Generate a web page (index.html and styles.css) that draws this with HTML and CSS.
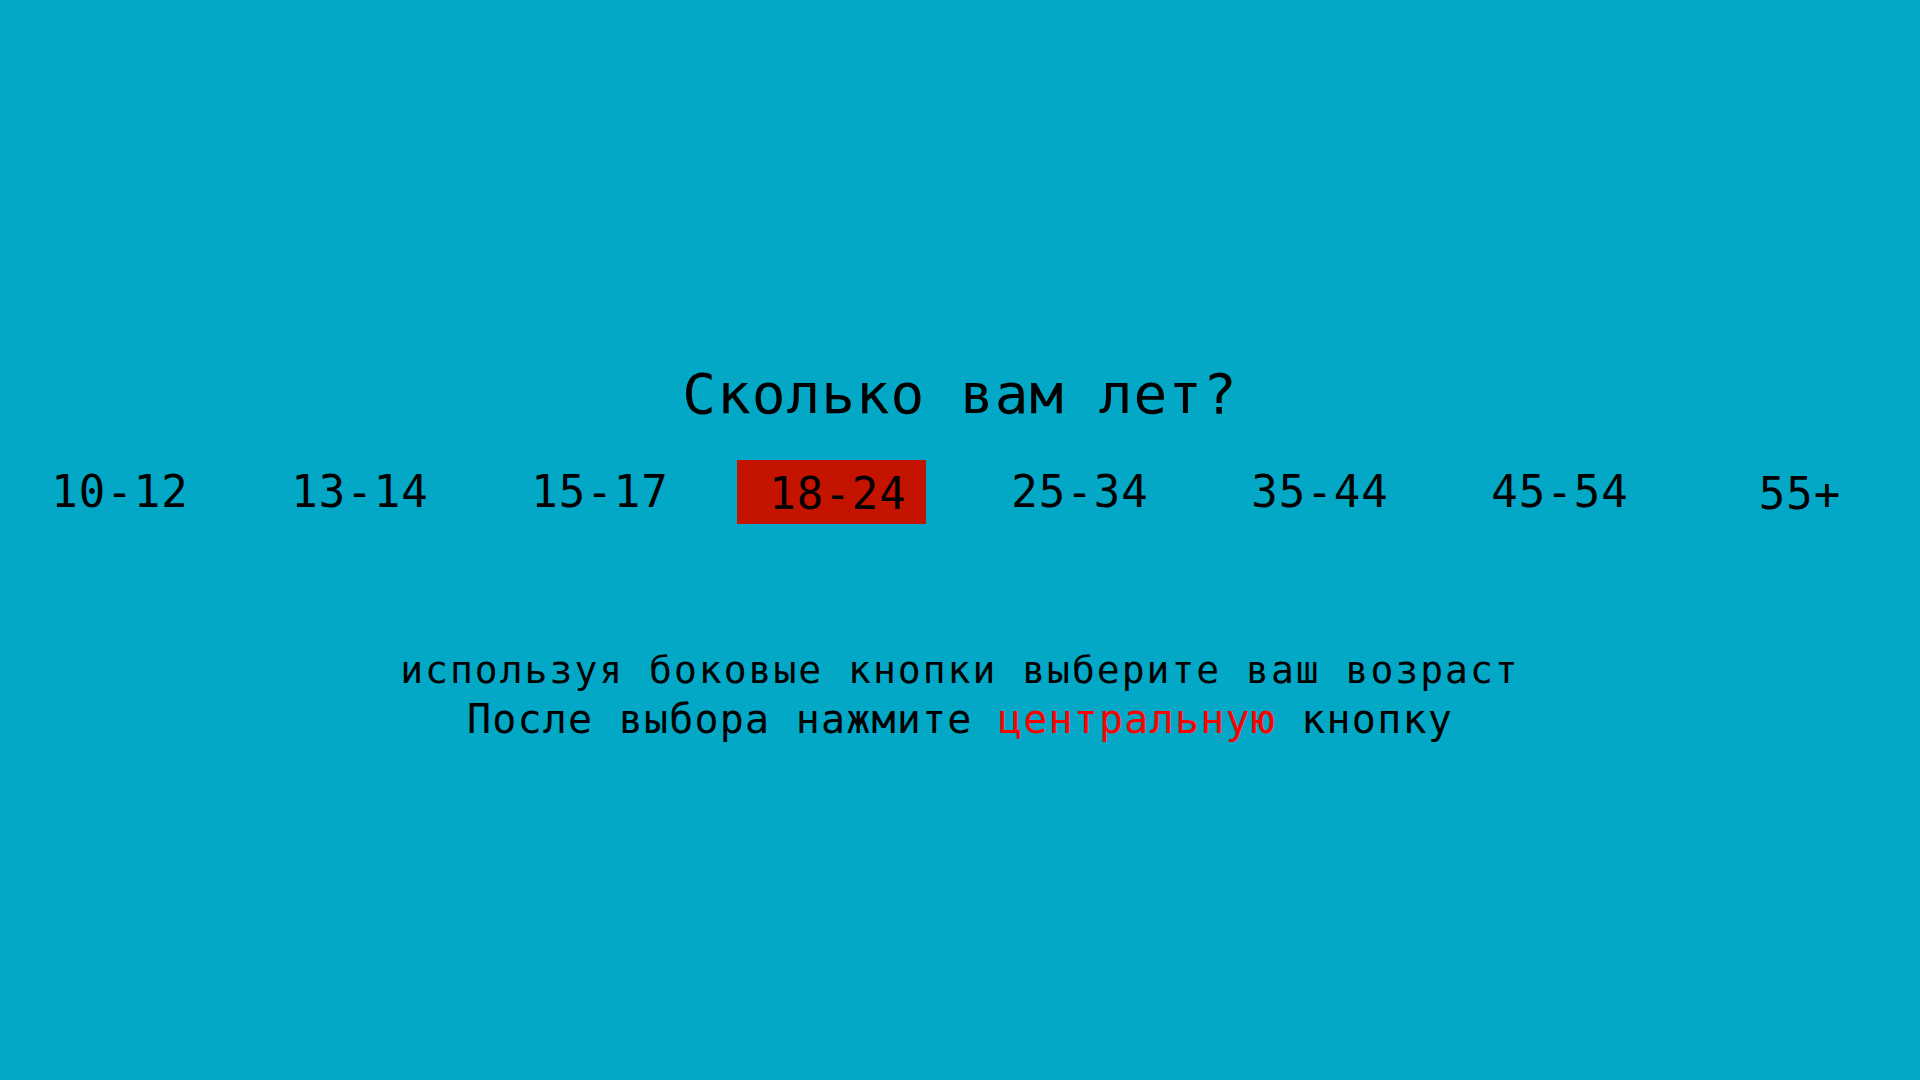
FILE: index.html
```html
<!DOCTYPE html>
<html lang="ru">
<head>
<meta charset="utf-8">
<title>Возраст</title>
<link rel="stylesheet" href="styles.css">
</head>
<body>
<main class="screen">
  <h1 class="title">Сколько вам лет?</h1>
  <ul class="ages">
    <li class="age"><span class="age-label">10-12</span></li>
    <li class="age"><span class="age-label">13-14</span></li>
    <li class="age"><span class="age-label">15-17</span></li>
    <li class="age"><span class="age-label is-selected">18-24</span></li>
    <li class="age"><span class="age-label">25-34</span></li>
    <li class="age"><span class="age-label">35-44</span></li>
    <li class="age"><span class="age-label">45-54</span></li>
    <li class="age"><span class="age-label is-low">55+</span></li>
  </ul>
  <div class="hint">
    <p class="hint-line hint-line--first">используя боковые кнопки выберите ваш возраст</p>
    <p class="hint-line hint-line--second">После выбора нажмите <span class="accent">центральную</span> кнопку</p>
  </div>
</main>
</body>
</html>
```

FILE: styles.css
```css
html, body {
  margin: 0;
  padding: 0;
  height: 100%;
}

body {
  background: #02a8c6;
  color: #000;
  font-family: "DejaVu Sans Mono", "Liberation Mono", monospace;
}

.screen {
  display: flex;
  flex-direction: column;
  align-items: center;
  padding-top: 361px;
}

.title {
  margin: 0;
  font-size: 56px;
  font-weight: normal;
  line-height: 66px;
  letter-spacing: 1px;
  text-align: center;
}

.ages {
  list-style: none;
  margin: 33px 0 0;
  padding: 0;
  width: 1920px;
  display: grid;
  grid-template-columns: repeat(8, 1fr);
}

.age {
  display: flex;
  justify-content: center;
  height: 64px;
}

.age-label {
  font-size: 44px;
  line-height: 64px;
  letter-spacing: 1px;
}

.age-label.is-low {
  line-height: 60px;
  padding-top: 4px;
}

.age-label.is-selected {
  background: #c41400;
  line-height: 60px;
  padding: 4px 19px 0 32px;
  margin-right: 17px;
}

.hint {
  margin-top: 123px;
  text-align: center;
}

.hint-line {
  margin: 0;
}

.hint-line--first {
  font-size: 38px;
  line-height: 46px;
  letter-spacing: 2px;
}

.hint-line--second {
  margin-top: 2px;
  font-size: 40px;
  line-height: 48px;
  letter-spacing: 1.2px;
}

.accent {
  color: #ff0000;
}
```
